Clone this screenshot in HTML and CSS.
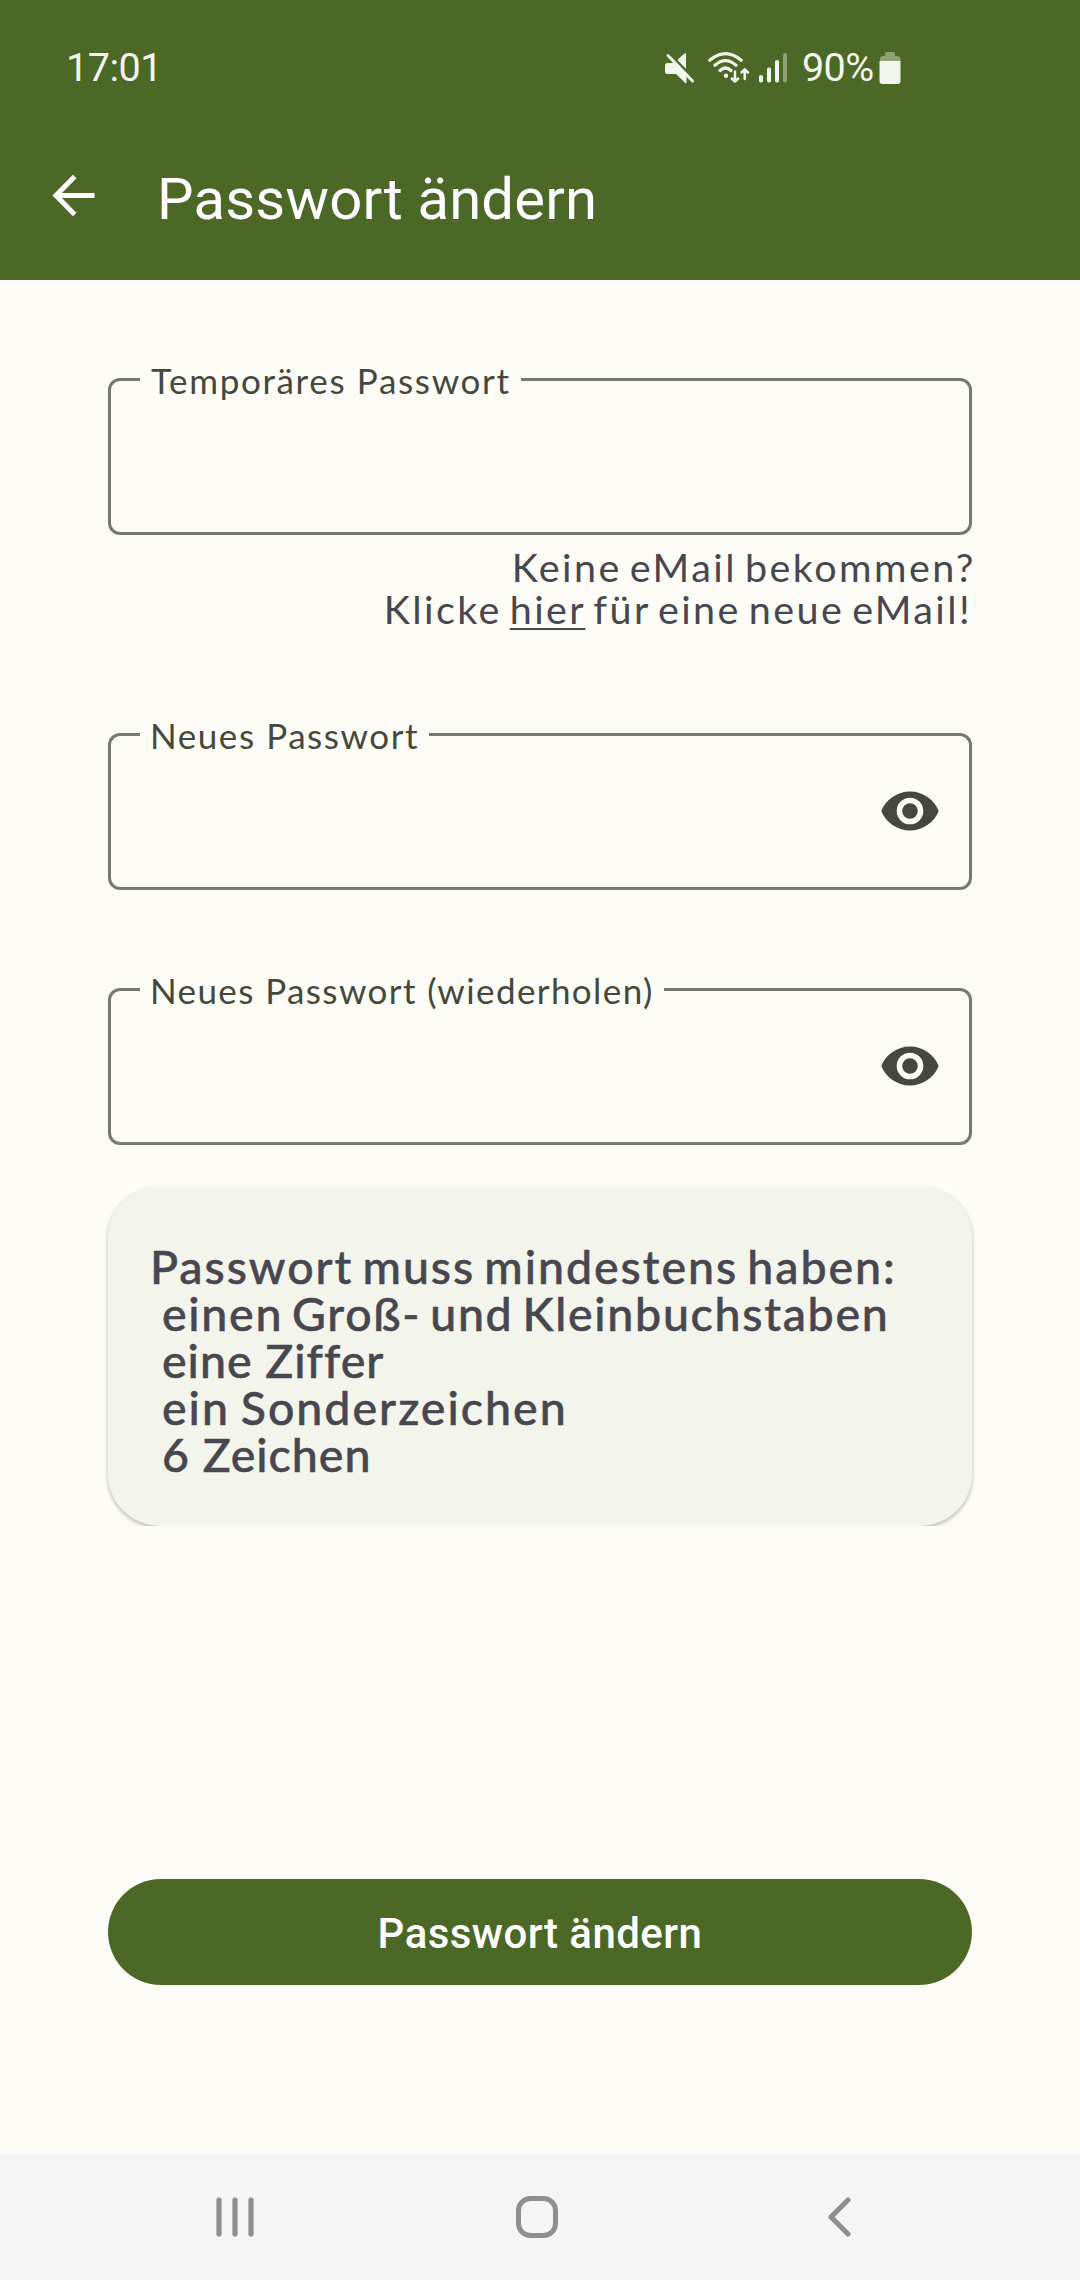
FILE: index.html
```html
<!DOCTYPE html>
<html lang="de">
<head>
<meta charset="utf-8">
<title>Passwort ändern</title>
<link rel="stylesheet" href="styles.css">
</head>
<body>
<div class="screen">
  <header class="top">
    <div class="status">
      <span class="clock">17:01</span>
      <svg class="status-icons" width="124" height="40" viewBox="0 0 124 40" fill="#f2f6ec">
        <path d="M3.500 13H10.500L22.500 25.500V32.500Q22.500 33.800 21.300 33L12 24H3.500Q1 24 1 21.500V15.500Q1 13 3.500 13ZM13.300 10L20.500 3.600Q22 2.500 22 4.300V18.800Z"/>
        <path d="M4 5.500L28.500 31" fill="none" stroke="#f2f6ec" stroke-width="3" stroke-linecap="round"/>
        <g fill="none" stroke="#f2f6ec" stroke-width="3.200" stroke-linecap="round" stroke-linejoin="round">
          <path d="M45.800 10.200Q61.500-3 77.200 10.200M51 15.300Q61.500 6 72 15.300M56 20.500Q61.500 15.500 67 20.500"/>
          <path d="M71 21.500V31M67.800 28.500L71 31.600L74.200 28.500M80.700 29V19.500M77.500 22.500L80.700 19.300L83.900 22.500" stroke-width="2.500"/>
        </g>
        <circle cx="62" cy="25.800" r="2.200"/>
        <rect x="95" y="25" width="4" height="7.500" rx="1.800"/>
        <rect x="103" y="17.500" width="4" height="15" rx="1.800"/>
        <rect x="111" y="10" width="4" height="22.500" rx="1.800"/>
        <rect x="119" y="3" width="4" height="29.500" rx="1.800" opacity=".4"/>
      </svg>
      <span class="charge">90%</span>
      <svg class="battery" width="22" height="34" viewBox="0 0 22 34" fill="#f2f6ec">
        <path opacity=".4" d="M1 10V8Q1 5 4 5H6V2.500Q6 1 7.500 1H14.500Q16 1 16 2.500V5H18.500Q21.500 5 21.500 8V10Z"/>
        <path d="M.500 10H21.500V30Q21.500 33 18.500 33H3.500Q.500 33 .500 30Z"/>
      </svg>
    </div>
    <div class="appbar">
      <svg class="back" width="44" height="44" viewBox="0 0 44 44" fill="none" stroke="#fff" stroke-width="5">
        <path d="M23.700 2.500L5 21.500L23.700 40.500M5 21.500H43.500"/>
      </svg>
      <h1 class="title">Passwort ändern</h1>
    </div>
  </header>

  <main class="form">
    <fieldset class="field">
      <legend class="label label-temp">Temporäres Passwort</legend>
    </fieldset>
    <p class="help">
      <span class="help-line">Keine eMail bekommen?</span>
      <span class="help-line help-resend">Klicke <a class="link">hier</a> für eine neue eMail!</span>
    </p>
    <fieldset class="field field-new">
      <legend class="label">Neues Passwort</legend>
      <svg class="eye" width="58" height="40" viewBox="0 0 58 40">
        <path fill="#45483d" fill-rule="evenodd" d="M29 .500C16 .500 5 8.500.300 20C5 31.500 16 39.500 29 39.500S53 31.500 57.700 20C53 8.500 42 .500 29 .500ZM29 33.300A13.300 13.300 0 1 1 29 6.700A13.300 13.300 0 0 1 29 33.300ZM29 12.200A7.800 7.800 0 1 0 29 27.800A7.800 7.800 0 0 0 29 12.200Z"/>
      </svg>
    </fieldset>
    <fieldset class="field field-repeat">
      <legend class="label label-repeat">Neues Passwort (wiederholen)</legend>
      <svg class="eye" width="58" height="40" viewBox="0 0 58 40">
        <path fill="#45483d" fill-rule="evenodd" d="M29 .500C16 .500 5 8.500.300 20C5 31.500 16 39.500 29 39.500S53 31.500 57.700 20C53 8.500 42 .500 29 .500ZM29 33.300A13.300 13.300 0 1 1 29 6.700A13.300 13.300 0 0 1 29 33.300ZM29 12.200A7.800 7.800 0 1 0 29 27.800A7.800 7.800 0 0 0 29 12.200Z"/>
      </svg>
    </fieldset>
    <section class="rules">
      <p class="rules-title">Passwort muss mindestens haben:</p>
      <ul class="rules-list">
        <li class="rule rule-case">einen Groß- und Kleinbuchstaben</li>
        <li class="rule">eine Ziffer</li>
        <li class="rule rule-special">ein Sonderzeichen</li>
        <li class="rule">6 Zeichen</li>
      </ul>
    </section>
    <button class="submit">Passwort ändern</button>
  </main>

  <nav class="navbar">
    <svg class="nav-recents" width="38" height="42" viewBox="0 0 38 42" fill="none" stroke="#8f8f8f" stroke-width="5.200" stroke-linecap="round">
      <path d="M3 4V38M19 4V38M35 4V38"/>
    </svg>
    <svg class="nav-home" width="42" height="42" viewBox="0 0 42 42" fill="none" stroke="#8f8f8f" stroke-width="5">
      <rect x="2.500" y="2.500" width="37" height="37" rx="12"/>
    </svg>
    <svg class="nav-back" width="24" height="42" viewBox="0 0 24 42" fill="none" stroke="#8f8f8f" stroke-width="5.200" stroke-linecap="round" stroke-linejoin="round">
      <path d="M21 4L4 21L21 38"/>
    </svg>
  </nav>
</div>
</body>
</html>
```
FILE: styles.css
```css
* {
  box-sizing: border-box;
  margin: 0;
  padding: 0;
}

body {
  background: #fdfcf7;
  font-family: Lato, "Noto Sans", sans-serif;
}

.screen {
  display: flex;
  flex-direction: column;
  width: 1080px;
  height: 2280px;
}

/* Status bar and app bar */
.top {
  height: 280px;
  background: #4b6826;
  font-family: Roboto, "Noto Sans", sans-serif;
}

.status {
  display: flex;
  align-items: flex-start;
  height: 136px;
  padding: 44px 179px 0 66px;
  color: #f2f6ec;
  font-size: 39.5px;
  line-height: 47px;
}

.clock {
  margin-right: auto;
  letter-spacing: -0.5px;
}

.status-icons {
  margin: 6px 14px 0 0;
}

.charge {
  width: 77px;
  letter-spacing: -0.6px;
}

.battery {
  margin-top: 7px;
}

.appbar {
  display: flex;
  padding: 38px 0 0 51px;
}

.back {
  margin-right: 62px;
}

.title {
  color: #fff;
  font-size: 58px;
  font-weight: 400;
  line-height: 50px;
  letter-spacing: 0.18px;
}

/* Form */
.form {
  display: flex;
  flex: 1;
  flex-direction: column;
  padding: 78px 108px 169px;
}

.field {
  height: 177px;
  padding: 0 30.5px 0 29px;
  border: 3px solid #77786e;
  border-radius: 12px;
}

.field-new {
  margin-top: 83px;
}

.field-repeat {
  margin-top: 78px;
}

.label {
  height: 43px;
  padding: 0 10px;
  color: #45483d;
  font-size: 35px;
  line-height: 45px;
  letter-spacing: 1.56px;
}

.label-temp {
  padding-left: 11px;
  letter-spacing: 1.66px;
}

.label-repeat {
  letter-spacing: 1.4px;
}

.eye {
  display: block;
  margin: 35px 0 0 auto;
}

.help {
  display: flex;
  flex-direction: column;
  align-items: flex-end;
  margin-top: 11px;
  color: #48464f;
  font-size: 39.5px;
  line-height: 42px;
}

.help-line {
  margin-right: -4px;
  letter-spacing: 2.45px;
  word-spacing: -4.5px;
}

.help-resend {
  margin-right: 0;
  letter-spacing: 2.4px;
}

.link {
  text-decoration: underline;
  text-decoration-thickness: 2px;
  text-underline-offset: 4px;
  text-decoration-skip-ink: none;
}

.rules {
  height: 340px;
  margin-top: 41px;
  padding: 57px 42px 0;
  border-radius: 52px;
  background: #f3f4eb;
  box-shadow: 0 2px 4px rgba(0, 0, 0, 0.28);
  clip-path: inset(0 -6px 0 -6px);
  color: #48464f;
  font-size: 46.5px;
  font-weight: 500;
  line-height: 47px;
  -webkit-text-stroke: 0.5px #48464f;
}

.rules-title {
  font-weight: 500;
  letter-spacing: 1.95px;
  word-spacing: -4.5px;
}

.rules-list {
  padding-left: 12px;
  list-style: none;
}

.rule {
  letter-spacing: 1px;
}

.rule-case {
  letter-spacing: 1.7px;
  word-spacing: -4.5px;
}

.rule-special {
  letter-spacing: 2px;
  word-spacing: -3px;
}

.submit {
  height: 106px;
  margin-top: auto;
  padding-top: 4px;
  border: 0;
  border-radius: 53px;
  background: #4b6826;
  color: #fff;
  font: 500 42px/50px Roboto, "Noto Sans", sans-serif;
  letter-spacing: 0.44px;
}

/* System navigation */
.navbar {
  display: flex;
  align-items: flex-start;
  height: 126px;
  padding: 42px 229px 0 216px;
  background: #f5f5f5;
}

.nav-home {
  margin-left: 262px;
}

.nav-back {
  margin-left: auto;
}
```
